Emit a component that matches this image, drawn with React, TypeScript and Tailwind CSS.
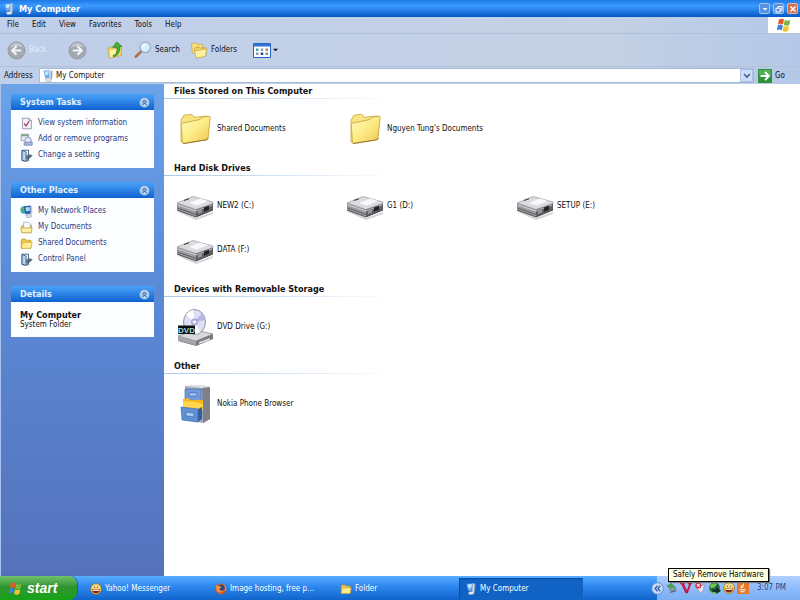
import React, { useState } from 'react';

type IconProps = { className?: string };

const ComputerIcon: React.FC<IconProps> = ({ className }) => (
  <svg viewBox="0 0 16 16" className={className} aria-hidden="true">
    <path d="M2 1l8-.8V10l-5.500 1z" fill="#4f95e6" />
    <path d="M3.200 2l6-.6-.5 4.600-4.500 1z" fill="#c4e9ff" />
    <path d="M4.200 7.500l4.300-1 0 2.700-3.500.6z" fill="#7cbcf5" />
    <path d="M10 .2l3.500.8-.5 10-3.500 2.500z" fill="#c9d7ea" />
    <path d="M12.500 1l1.500.5-.5 9.500-1.500 1z" fill="#7f96b8" />
    <path d="M5 12l5-1 2.500 1.500-1 2.500-5 .8-2-1.500z" fill="#e3e8f0" stroke="#7b86a0" strokeWidth=".6" />
  </svg>
);

const FlagIcon: React.FC<IconProps> = ({ className }) => (
  <svg viewBox="0 0 16 16" className={className} aria-hidden="true">
    <path d="M3 2.500c2-1.200 3.500-1 5 0L7 7.500C5.500 6.500 4 6.400 2 7.300z" fill="#e8572a" />
    <path d="M8.700 3c1.800 1 3.500 1 5.600 0l-1 5c-2 1-3.800 1-5.500 0z" fill="#77b83b" />
    <path d="M1.800 8.200c2-1 3.600-.8 5 .2l-1 5c-1.500-1-3-1.100-5-.2z" fill="#3f7fd8" />
    <path d="M7.600 8.900c1.700 1 3.500 1 5.500 0l-1 5c-2 1-3.900 1-5.500 0z" fill="#f5c32c" />
  </svg>
);

const SmallFolderIcon: React.FC<IconProps> = ({ className }) => (
  <svg viewBox="0 0 16 16" className={className} aria-hidden="true">
    <path d="M1.500 4l1-1.500h4L8 4h5.500v9.500h-12z" fill="#f0c850" stroke="#b98d1c" strokeWidth=".8" />
    <path d="M3 6.500h12l-1.500 7.500h-12z" fill="#ffec90" stroke="#c9a02c" strokeWidth=".8" />
  </svg>
);

const FolderIcon: React.FC<IconProps> = ({ className }) => (
  <svg viewBox="0 0 40 40" className={className} aria-hidden="true">
    <defs>
      <linearGradient id="folderFront" x1="0" y1="0" x2="1" y2="1">
        <stop offset="0" stopColor="#fffac0" />
        <stop offset=".5" stopColor="#fdec86" />
        <stop offset="1" stopColor="#eec24d" />
      </linearGradient>
    </defs>
    <path d="M6 33V11c0-1 .5-1.500 1.500-1.500L8 7.500c.4-1 1-1.300 2-1.400l6-.8c1 0 1.500.3 2 1.200l1 1.800L31.500 7c1.500 0 2 .5 2 1.500L33 26 8 33z" fill="#f8e481" stroke="#cba63c" strokeWidth=".8" />
    <path d="M8 14l17-3.500 1.500-2.200 7.500-1c1 0 1.300.5 1.200 1.300L33 29c0 1-.5 1.600-1.500 1.900L9 34.600c-1 .2-1.500-.2-1.500-1.200L6.300 15.500c0-1 .7-1.300 1.700-1.500z" fill="url(#folderFront)" stroke="#c8a036" strokeWidth=".8" />
    <path d="M8 34.500l23.500-3.700c1-.3 1.500-.9 1.600-1.900" fill="none" stroke="#8d7431" strokeWidth=".9" />
  </svg>
);

const DriveIcon: React.FC<IconProps> = ({ className }) => (
  <svg viewBox="0 0 40 40" className={className} aria-hidden="true">
    <path d="M3 24l18 8 17-6v2l-17 6-18-8z" fill="#a8a8ac" opacity=".5" />
    <path d="M2 17l19 6v8L2 24z" fill="#9c9ca0" />
    <path d="M21 23l17-6v7l-17 7z" fill="#5f5f64" />
    <path d="M2 17l16-6.500 20 5.500v1.500l-17 6z" fill="#dcdce0" stroke="#8a8a8e" strokeWidth=".6" />
    <path d="M14 17l11-4.500 8 2.500-11 4.500z" fill="#f8f8fa" />
    <path d="M3 19l18 6 16-6" fill="none" stroke="#e5e5e8" strokeWidth=".7" />
    <path d="M2.500 22l18.500 6.500" fill="none" stroke="#55555a" strokeWidth=".9" />
    <path d="M2 24l19 7 17-7" fill="none" stroke="#414146" strokeWidth=".9" />
    <path d="M29 21.500l5-1.800v4l-5 2z" fill="#222226" />
    <path d="M23 25l4-1.500v3L23 28z" fill="#98989c" />
    <path d="M9 14.500l5-1.800" stroke="#444448" strokeWidth="1.200" />
  </svg>
);

const DvdIcon: React.FC<IconProps> = ({ className }) => (
  <svg viewBox="0 0 40 40" className={className} aria-hidden="true">
    <path d="M3 29l17-6 18 4v5L21 39 3 34z" fill="#77777c" />
    <path d="M3 29l17-6 18 4-17 7z" fill="#d8d8dc" stroke="#85858a" strokeWidth=".6" />
    <path d="M21 34v4.500L3 33.500V29z" fill="#a5a5aa" />
    <path d="M24 35l11-4v2l-11 4z" fill="#dadade" />
    <ellipse cx="19.500" cy="15" rx="11" ry="12.500" fill="#dedff2" stroke="#77778f" strokeWidth=".8" />
    <path d="M19.500 15L11 8a11 12 0 0 1 7-5z" fill="#fff" />
    <path d="M19.500 15L27 6a11 12 0 0 1 3 7z" fill="#b9b3ea" />
    <path d="M19.500 15l6 10a11 11 0 0 1-8 2z" fill="#fbfbff" />
    <circle cx="19.500" cy="15" r="3.200" fill="#b7b8da" stroke="#8686b0" strokeWidth=".5" />
    <circle cx="19.500" cy="15" r="1.500" fill="#fff" />
    <path d="M3 18.500h17v8.500H3z" fill="#0a1012" />
    <text x="11.500" y="25.700" textAnchor="middle" fontSize="8" fontWeight="700" fontFamily="Liberation Sans, sans-serif" fill="#a9dfe2">DVD</text>
  </svg>
);

const CabinetIcon: React.FC<IconProps> = ({ className }) => (
  <svg viewBox="0 0 40 40" className={className} aria-hidden="true">
    <path d="M10 2l16-1 9 2v32l-7 4-18-3z" fill="#a9aeb6" />
    <path d="M27 3l8 0v32l-7 4z" fill="#7c818b" />
    <path d="M10 2l16-1 9 2-8 1z" fill="#e0e4ea" />
    <path d="M10 5l16 0v12l-16-1z" fill="#6f9bdb" stroke="#3d66a8" strokeWidth=".6" />
    <path d="M14 9h8v3h-8z" fill="#a9c9f2" stroke="#345b9b" strokeWidth=".6" />
    <path d="M8 15l5-1 2 2h13v10l-20 0z" fill="#f6b51d" />
    <path d="M8 17l12 1 8 2v6H8z" fill="#ffd64c" />
    <path d="M6 23l17 2v13L7 36z" fill="#5f90d6" stroke="#34609f" strokeWidth=".6" />
    <path d="M23 25l4-2v12l-4 3z" fill="#365e9c" />
    <path d="M11 28l8 1v4l-8-1z" fill="#a6c8f4" stroke="#34609f" strokeWidth=".6" />
  </svg>
);

const CheckPageIcon: React.FC<IconProps> = ({ className }) => (
  <svg viewBox="0 0 16 16" className={className} aria-hidden="true">
    <path d="M3 1.500h8l3 3v10H3z" fill="#f2f2fa" stroke="#8a8aa5" />
    <path d="M11 1.500v3h3" fill="none" stroke="#8a8aa5" />
    <path d="M5 8l2.500 3L11 5.500" fill="none" stroke="#a8435e" strokeWidth="1.600" />
  </svg>
);

const ProgramsIcon: React.FC<IconProps> = ({ className }) => (
  <svg viewBox="0 0 16 16" className={className} aria-hidden="true">
    <path d="M1.500 1.500h9v8h-9z" fill="#e8eef8" stroke="#7a8fb5" />
    <path d="M2 2h8v2H2z" fill="#7ba66b" />
    <circle cx="10" cy="9" r="4" fill="#d5dcf2" stroke="#7887b5" strokeWidth=".8" />
    <circle cx="10" cy="9" r="1.200" fill="#fff" />
    <path d="M5 12l10-1v4H5z" fill="#a9bbdf" stroke="#5d75a8" strokeWidth=".8" />
  </svg>
);

const SettingIcon: React.FC<IconProps> = ({ className }) => (
  <svg viewBox="0 0 16 16" className={className} aria-hidden="true">
    <path d="M2.500 1.500h8v13h-8z" fill="#e7f1fb" stroke="#2e4f78" />
    <path d="M2.500 1.500l5 2.500v11.500l-5-2z" fill="#b8d6f0" stroke="#2e4f78" />
    <path d="M8 9l3-2 4 1-2 2-4 3z" fill="#5b7188" stroke="#23364d" strokeWidth=".6" />
  </svg>
);

const NetworkIcon: React.FC<IconProps> = ({ className }) => (
  <svg viewBox="0 0 16 16" className={className} aria-hidden="true">
    <circle cx="5" cy="6" r="4.500" fill="#3aa0c8" />
    <path d="M2 3.500c2-2 4-1 4 1S3 8 2 8z" fill="#59b853" />
    <path d="M5 2l8-1v9l-6 1z" fill="#2b62b8" stroke="#23477d" strokeWidth=".7" />
    <path d="M6.500 3.200l5.500-.7v4.500L7.500 8z" fill="#9fdcff" />
    <path d="M13 1l2 1v8l-2 2z" fill="#b9c6d8" />
    <path d="M7 12.500l6-1 1.500 2-1 1.500-5 .5z" fill="#dce3ec" stroke="#74859b" strokeWidth=".6" />
  </svg>
);

const DocsIcon: React.FC<IconProps> = ({ className }) => (
  <svg viewBox="0 0 16 16" className={className} aria-hidden="true">
    <path d="M2 6l3-1h9v9H2z" fill="#f1cf62" stroke="#b08c2c" strokeWidth=".8" />
    <path d="M4.500 1.500h6l2 2V10h-8z" fill="#f6faff" stroke="#8fa2bf" strokeWidth=".8" />
    <path d="M1 8.500h14l-1 6H2z" fill="#fdeea0" stroke="#b8962f" strokeWidth=".8" />
  </svg>
);

const SmileyIcon: React.FC<IconProps> = ({ className }) => (
  <svg viewBox="0 0 16 16" className={className} aria-hidden="true">
    <circle cx="8" cy="8" r="7.300" fill="#f9cf45" stroke="#8f5a16" strokeWidth=".8" />
    <circle cx="5.300" cy="5" r="2" fill="#fff" />
    <circle cx="10.700" cy="5" r="2" fill="#fff" />
    <circle cx="5.600" cy="5.300" r=".9" fill="#222" />
    <circle cx="10.400" cy="5.300" r=".9" fill="#222" />
    <path d="M2.500 8.500h11c-.5 3.500-2.500 5.300-5.500 5.300S3 12 2.500 8.500z" fill="#8c2018" />
    <path d="M3.500 9h9v1.500h-9z" fill="#fff" />
  </svg>
);

const FirefoxIcon: React.FC<IconProps> = ({ className }) => (
  <svg viewBox="0 0 16 16" className={className} aria-hidden="true">
    <circle cx="8" cy="8" r="7.300" fill="#d8571c" />
    <circle cx="8.500" cy="6.800" r="4.600" fill="#31477f" />
    <path d="M1 5l2-3 1 2c2-.5 4 .5 4.500 1.500L6 7.500c0 3 4 3.500 6 1.500-1 4-7 5-9.500 1.500z" fill="#f49337" />
    <path d="M12 3c2 1.500 2.500 4 1.500 7" fill="none" stroke="#f8b85a" />
  </svg>
);

const NavArrow: React.FC<{ flip?: boolean }> = ({ flip }) => (
  <svg viewBox="0 0 20 20" className="h-[19px] w-[19px]" aria-hidden="true">
    <circle cx="10" cy="10" r="9" fill="#a4a9b1" stroke="#8d939d" strokeWidth=".8" />
    <path d="M3 7a7.500 7.500 0 0 1 14 0c-4-2-10-2-14 0z" fill="#c5c9cf" />
    <path
      d={flip ? 'M5 10h9M10 5.500l4.500 4.500-4.500 4.500' : 'M15 10H6M10 5.500L5.500 10l4.500 4.500'}
      fill="none"
      stroke="#f2f4f7"
      strokeWidth="2.200"
    />
  </svg>
);

const UpFolderIcon: React.FC<IconProps> = ({ className }) => (
  <svg viewBox="0 0 20 20" className={className} aria-hidden="true">
    <path d="M2 8l6-2 2 2 7-2v10L4 19z" fill="#f3d766" stroke="#b7973a" strokeWidth=".7" />
    <path d="M3 10l9-2v9l-8 2z" fill="#fdf0a0" stroke="#c5a544" strokeWidth=".6" />
    <path d="M8 16c4-1 5-5 4-9H7.500L12 1l5.500 5H15c1 6-2 10-6.500 11.500z" fill="#46b534" stroke="#25771f" strokeWidth=".8" />
  </svg>
);

const SearchIcon: React.FC<IconProps> = ({ className }) => (
  <svg viewBox="0 0 20 20" className={className} aria-hidden="true">
    <path d="M8 11.500l-6 6" stroke="#b0704c" strokeWidth="3" strokeLinecap="round" />
    <circle cx="12.500" cy="7" r="5.800" fill="#d6efff" stroke="#96a9c3" strokeWidth="1.300" />
    <path d="M9 6c1-2.500 4-3 5.500-1.500C12 4.500 10.500 6 10 8z" fill="#fff" />
  </svg>
);

const FoldersIcon: React.FC<IconProps> = ({ className }) => (
  <svg viewBox="0 0 20 20" className={className} aria-hidden="true">
    <path d="M1.500 3l5-1 1.500 2 6-.5V11L3 14z" fill="#f6df7c" stroke="#c3a143" strokeWidth=".7" />
    <path d="M5 8l5-1.500 1.500 1.500 7-.5-1 9L7 19z" fill="#f1d264" stroke="#ba9638" strokeWidth=".7" />
    <path d="M5 11l13.500-2-1.500 8L7 19z" fill="#fdf0a1" stroke="#c8a84a" strokeWidth=".7" />
  </svg>
);

const ViewsIcon: React.FC<IconProps> = ({ className }) => (
  <svg viewBox="0 0 18 15" className={className} aria-hidden="true">
    <path d="M.5.5h17v14H.5z" fill="#fff" stroke="#2566c2" />
    <path d="M1 1h16v2.500H1z" fill="#2f74d2" />
    <path d="M3 5.500h2.500V8H3zM12.500 9.500H15V12h-2.500z" fill="#53a3a5" />
    <path d="M7.700 5.500h2.500V8H7.700zM3 9.500h2.500V12H3z" fill="#8a9bb5" />
    <path d="M12.500 5.500H15V8h-2.500z" fill="#c98467" />
    <path d="M7.700 9.500h2.500V12H7.700z" fill="#2a3e83" />
  </svg>
);

const menus = ['File', 'Edit', 'View', 'Favorites', 'Tools', 'Help'];

const taskPanes = [
  {
    title: 'System Tasks',
    links: [
      { label: 'View system information', Icon: CheckPageIcon },
      { label: 'Add or remove programs', Icon: ProgramsIcon },
      { label: 'Change a setting', Icon: SettingIcon },
    ],
  },
  {
    title: 'Other Places',
    links: [
      { label: 'My Network Places', Icon: NetworkIcon },
      { label: 'My Documents', Icon: DocsIcon },
      { label: 'Shared Documents', Icon: SmallFolderIcon },
      { label: 'Control Panel', Icon: SettingIcon },
    ],
  },
];

const groups = [
  {
    title: 'Files Stored on This Computer',
    items: [
      { label: 'Shared Documents', Icon: FolderIcon },
      { label: "Nguyen Tung's Documents", Icon: FolderIcon },
    ],
  },
  {
    title: 'Hard Disk Drives',
    items: [
      { label: 'NEW2 (C:)', Icon: DriveIcon },
      { label: 'G1 (D:)', Icon: DriveIcon },
      { label: 'SETUP (E:)', Icon: DriveIcon },
      { label: 'DATA (F:)', Icon: DriveIcon },
    ],
  },
  { title: 'Devices with Removable Storage', items: [{ label: 'DVD Drive (G:)', Icon: DvdIcon }] },
  { title: 'Other', items: [{ label: 'Nokia Phone Browser', Icon: CabinetIcon }] },
];

const tasks = [
  { label: 'Yahoo! Messenger', Icon: SmileyIcon },
  { label: 'Image hosting, free p...', Icon: FirefoxIcon },
  { label: 'Folder', Icon: SmallFolderIcon },
  { label: 'My Computer', Icon: ComputerIcon, active: true },
];

const Pane: React.FC<{ title: string; children: React.ReactNode }> = ({ title, children }) => {
  const [open, setOpen] = useState(true);

  return (
    <section>
      <button
        onClick={() => setOpen(!open)}
        aria-expanded={open}
        className="flex h-4 w-full items-center justify-between bg-linear-to-b from-[#4aa2fa] to-[#0c63cf] pr-1 pl-[9px] text-[9px] font-bold text-[#e2f0ff]"
      >
        {title}
        <svg viewBox="0 0 12 12" className="h-[11px] w-[11px]" aria-hidden="true">
          <circle cx="6" cy="6" r="5.500" fill="#b9d5f5" stroke="#4b7fbe" strokeWidth=".6" />
          <path d="M3.500 6L6 3.500 8.500 6M3.500 8.800L6 6.300l2.500 2.500" fill="none" stroke="#4a76b0" strokeWidth="1.200" />
        </svg>
      </button>
      {open && <div className="bg-[#fcfdff]">{children}</div>}
    </section>
  );
};

const TitleBar = () => (
  <header className="flex h-[17px] items-center gap-1 bg-linear-to-b from-[#1f7ae6] via-[#3b9bff] via-35% to-[#0359c4] pr-0.5 pl-[3px]">
    <ComputerIcon className="h-3 w-3" />
    <h1 className="flex-1 text-[9px] font-bold text-white">My Computer</h1>
    <div className="flex gap-[3px]">
      <button aria-label="Minimize" className="flex h-[11px] w-[11px] items-center justify-center rounded-xs border border-[#9dc3f2] bg-[#5b90dc]">
        <svg viewBox="0 0 8 8" className="h-2 w-2" aria-hidden="true"><path d="M1.500 3h5L4 5.500z" fill="#fff" /></svg>
      </button>
      <button aria-label="Restore" className="flex h-[11px] w-[11px] items-center justify-center rounded-xs border border-[#9dc3f2] bg-[#5b90dc]">
        <svg viewBox="0 0 8 8" className="h-2 w-2" aria-hidden="true"><path d="M3 3V1.500h4v4H5.500M1 3.200h4.300v3.800H1z" fill="none" stroke="#fff" /></svg>
      </button>
      <button aria-label="Close" className="flex h-[11px] w-[11px] items-center justify-center rounded-xs border border-[#e5b6a8] bg-[#cf7052]">
        <svg viewBox="0 0 8 8" className="h-2 w-2" aria-hidden="true"><path d="M1.500 1.500l5 5M6.500 1.500l-5 5" stroke="#fff" strokeWidth="1.500" /></svg>
      </button>
    </div>
  </header>
);

const Toolbars = () => (
  <div className="bg-linear-to-r from-[#c0cfea] via-[#c4d1e4] via-75% to-[#b4c8e8]">
    <div className="flex h-[17px] items-stretch border-b border-[#afc0dc]">
      <nav className="flex flex-1 items-center gap-[13px] pl-[7px]">
        {menus.map((menu) => (
          <button key={menu}>{menu}</button>
        ))}
      </nav>
      <div className="flex w-8 items-center justify-center bg-white">
        <FlagIcon className="h-4 w-4" />
      </div>
    </div>
    <div className="flex h-8 items-center pl-[7px]">
      <button disabled className="flex w-[61px] items-center gap-[3px] text-[#e4ebf6]">
        <NavArrow />
        Back
      </button>
      <button disabled aria-label="Forward" className="w-[38px]">
        <NavArrow flip />
      </button>
      <button aria-label="Up" className="w-7">
        <UpFolderIcon className="h-[18px] w-[18px]" />
      </button>
      <button className="flex w-14 items-center gap-[3px]">
        <SearchIcon className="h-[18px] w-[18px]" />
        Search
      </button>
      <button className="flex w-[63px] items-center gap-[3px]">
        <FoldersIcon className="h-[18px] w-[18px]" />
        Folders
      </button>
      <button aria-label="Views" className="flex items-center gap-0.5">
        <ViewsIcon className="h-[15px] w-[18px]" />
        <svg viewBox="0 0 6 4" className="h-1 w-[5px]" aria-hidden="true"><path d="M0 .5h6L3 3.500z" fill="#111" /></svg>
      </button>
    </div>
    <form className="flex h-[18px] items-center border-t border-[#b3c1d8] pl-1" onSubmit={(e) => e.preventDefault()}>
      <label htmlFor="address" className="w-[35px]">Address</label>
      <div className="flex h-[15px] flex-1 items-center border border-[#a5bad8] bg-white">
        <ComputerIcon className="mx-0.5 h-3 w-3" />
        <input id="address" defaultValue="My Computer" className="min-w-0 flex-1 outline-none" />
        <button type="button" aria-label="Show addresses" className="flex h-[13px] w-[13px] items-center justify-center border border-[#a9bfe4] bg-[#cddcf8]">
          <svg viewBox="0 0 8 6" className="h-1.5 w-2" aria-hidden="true"><path d="M1 1l3 3 3-3" fill="none" stroke="#46618d" strokeWidth="1.600" /></svg>
        </button>
      </div>
      <button className="flex w-[46px] items-center gap-[3px] pl-1">
        <svg viewBox="0 0 14 14" className="h-3.5 w-3.5" aria-hidden="true">
          <path d="M0 0h14v14H0z" fill="#2f9138" />
          <path d="M1 1h12v5H1z" fill="#54ad56" />
          <path d="M2.500 7h8M7 3l4 4-4 4" fill="none" stroke="#fff" strokeWidth="1.800" />
        </svg>
        Go
      </button>
    </form>
  </div>
);

const Sidebar = () => (
  <aside className="flex w-[164px] shrink-0 flex-col gap-3.5 border-l border-[#a9c3ee] bg-linear-to-b from-[#6ba2e8] via-[#5b8bd6] via-40% to-[#5571bc] px-2.5 pt-2.5">
    {taskPanes.map(({ title, links }) => (
      <Pane key={title} title={title}>
        <ul className="py-[5px] pl-[9px]">
          {links.map(({ label, Icon }) => (
            <li key={label}>
              <a href="#" className="flex h-4 items-center gap-[5px] text-[#263a83]">
                <Icon className="h-[13px] w-[13px]" />
                {label}
              </a>
            </li>
          ))}
        </ul>
      </Pane>
    ))}
    <Pane title="Details">
      <div className="px-[9px] pt-2 pb-[7px] leading-[10px]">
        <p className="text-[9px] font-bold">My Computer</p>
        <p>System Folder</p>
      </div>
    </Pane>
  </aside>
);

const FileList = () => (
  <main className="min-w-0 flex-1 bg-white">
    {groups.map(({ title, items }) => (
      <section key={title}>
        <h2 className="flex h-3.5 items-center pl-2.5 text-[9px] font-bold">{title}</h2>
        <div className="h-px w-[230px] bg-linear-to-r from-[#a9c9ea] to-white" />
        <div className="grid grid-cols-[repeat(auto-fill,170px)] pt-2 pb-2.5 pl-[11px]">
          {items.map(({ label, Icon }) => (
            <button key={label} className="flex h-11 items-center gap-0.5 whitespace-nowrap">
              <Icon className="h-10 w-10" />
              {label}
            </button>
          ))}
        </div>
      </section>
    ))}
  </main>
);

const Tray = () => (
  <div className="relative flex w-[143px] items-center gap-0.5 bg-linear-to-b from-[#b0d0ff] via-[#8fbcfb] to-[#7aaef2] text-[#26487e]">
    <button aria-label="Show hidden icons" className="-ml-1.5">
      <svg viewBox="0 0 14 14" className="h-[13px] w-[13px]" aria-hidden="true">
        <circle cx="7" cy="7" r="6.300" fill="#c6dbf8" stroke="#5c87c6" />
        <path d="M7 4L4.500 7 7 10M10 4L7.500 7 10 10" fill="none" stroke="#2c58a4" strokeWidth="1.300" />
      </svg>
    </button>
    <svg viewBox="0 0 14 14" className="h-3 w-3" aria-hidden="true">
      <path d="M1 4l6-2 5 6-6 3z" fill="#8b9aa5" stroke="#566873" strokeWidth=".6" />
      <path d="M2 5l5-4v2.500c3 0 4 2 3 5-1-2-2-2.500-3-2.300V8z" fill="#3aab3d" />
      <path d="M5 12l7-2" stroke="#576a72" strokeWidth="1.500" />
    </svg>
    <svg viewBox="0 0 14 14" className="h-3 w-3" aria-hidden="true">
      <path d="M0 1h5.500v1.500H5L8 9.500 10.500 3 9 2.500V1h5v1.500h-1L9 13H6.500L1.500 2.500H0z" fill="#c8173c" />
    </svg>
    <svg viewBox="0 0 14 14" className="h-3 w-3" aria-hidden="true">
      <path d="M3 6l9-3-1 7-4 3z" fill="#e6e3ec" stroke="#8b8ba3" strokeWidth=".8" />
      <circle cx="5" cy="4" r="3.500" fill="#d23240" />
      <path d="M3.500 2.500l3 3M6.500 2.500l-3 3" stroke="#fff" strokeWidth="1.200" />
    </svg>
    <svg viewBox="0 0 14 14" className="h-[13px] w-[13px]" aria-hidden="true">
      <circle cx="7" cy="6" r="5.700" fill="#1d6545" />
      <path d="M2 4c2-3 5-3 8-2L7 6 3 7z" fill="#6dc251" />
      <path d="M5 8h4V5l5 4.500L9 13v-2H5z" fill="#16301f" />
      <path d="M1 9l4 3 3-1" fill="none" stroke="#6cc13f" strokeWidth="1.300" />
    </svg>
    <SmileyIcon className="h-3 w-3" />
    <svg viewBox="0 0 14 14" className="h-3 w-3" aria-hidden="true">
      <path d="M0 0h14v14H0z" fill="#ea7827" />
      <path d="M7 2c2 2-2 3 0 5M5 4c1 1-1 2 0 3M3 9h7M4 11.500h5" fill="none" stroke="#fff" strokeWidth="1.200" />
    </svg>
    <time className="ml-1.5">3:07 PM</time>
    <div role="tooltip" className="absolute bottom-[18px] left-[11px] flex h-3.5 items-center border border-black bg-[#ffffe1] px-1 whitespace-nowrap text-black shadow-[1px_1px_1px_#777]">
      Safely Remove Hardware
    </div>
  </div>
);

const Taskbar = () => (
  <footer className="flex h-6 bg-linear-to-b from-[#58adff] via-[#2d86ee] via-45% to-[#0e65ca]">
    <button className="flex w-[77px] items-center gap-1 rounded-r-lg bg-linear-to-b from-[#70c26c] via-[#2f942e] via-45% to-[#12a413] pl-2 font-['Liberation_Sans',sans-serif] text-[14px] font-bold text-white italic shadow-[1px_0_1px_#1d5cab]">
      <FlagIcon className="h-[15px] w-[15px]" />
      start
    </button>
    <div className="flex min-w-0 flex-1 gap-px pt-0.5 pl-[7px] text-white">
      {tasks.map(({ label, Icon, active }) => (
        <button
          key={label}
          className={`flex w-[124px] items-center gap-[3px] pl-1.5 whitespace-nowrap ${active ? 'bg-[#1062c4] shadow-[inset_1px_1px_1px_#0a4c9f]' : ''}`}
        >
          <Icon className="h-3 w-3" />
          {label}
        </button>
      ))}
    </div>
    <Tray />
  </footer>
);

export default function App() {
  return (
    <div className="flex h-screen flex-col overflow-hidden font-['DejaVu_Sans_Condensed','DejaVu_Sans',sans-serif] text-[8px] leading-[12px] text-[#111]">
      <TitleBar />
      <Toolbars />
      <div className="flex min-h-0 flex-1">
        <Sidebar />
        <FileList />
      </div>
      <Taskbar />
    </div>
  );
}
